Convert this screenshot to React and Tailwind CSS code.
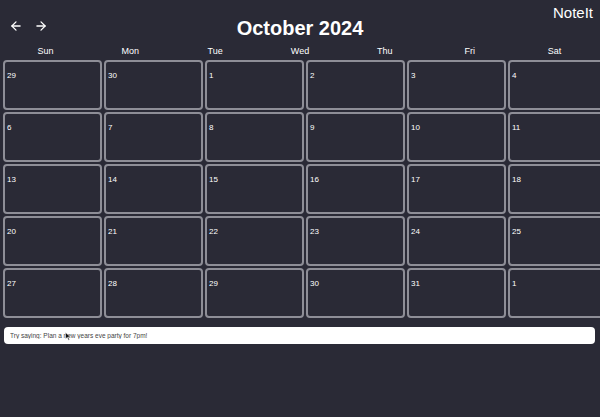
import { ArrowLeft, ArrowRight } from 'lucide-react';

const DAYS = ['Sun', 'Mon', 'Tue', 'Wed', 'Thu', 'Fri', 'Sat'];

// October 2024 starts on a Tuesday, so the grid opens with the last two days of September
const CELLS = [
  29, 30, 1, 2, 3, 4, 5,
  6, 7, 8, 9, 10, 11, 12,
  13, 14, 15, 16, 17, 18, 19,
  20, 21, 22, 23, 24, 25, 26,
  27, 28, 29, 30, 31, 1, 2,
];

function Header() {
  return (
    <div className="grid grid-cols-[1fr_auto_1fr] h-[45px]">
      <div className="flex items-start gap-[11px] pl-[9px] pt-[19px] text-white">
        <button className="p-0">
          <ArrowLeft size={14} strokeWidth={2.2} />
        </button>
        <button className="p-0">
          <ArrowRight size={14} strokeWidth={2.2} />
        </button>
      </div>
      <h1 className="pt-[16px] text-[20px] leading-[24px] font-bold text-white">October 2024</h1>
      <div className="flex justify-end pr-[7px] pt-[4px]">
        <span className="text-[15px] leading-[18px] text-white">NoteIt</span>
      </div>
    </div>
  );
}

function Calendar() {
  return (
    <div>
      <div className="grid grid-cols-7 px-[3px] mb-[3px]">
        {DAYS.map((d) => (
          <div key={d} className="text-center text-[9px] leading-[12px] text-white">
            {d}
          </div>
        ))}
      </div>
      <div className="grid grid-cols-[repeat(7,99px)] gap-[2px] pl-[3px]">
        {CELLS.map((n, i) => (
          <div
            key={i}
            className="h-[50px] rounded-[4px] border-2 border-[#8e8e97] pl-[2px] pt-[8px]"
          >
            <span className="block text-[8px] leading-[12px] text-white">{n}</span>
          </div>
        ))}
      </div>
    </div>
  );
}

export default function App() {
  return (
    <div
      className="w-[600px] h-[417px] overflow-hidden bg-[#2a2a36]"
      style={{ fontFamily: '"Liberation Sans", Arial, sans-serif' }}
    >
      <Header />
      <Calendar />
      <div className="relative mt-[9px] ml-[4px] mr-[5px]">
        <input
          type="text"
          placeholder="Try saying: Plan a new years eve party for 7pm!"
          className="block w-full h-[17px] rounded-[4px] bg-white px-[6px] text-[6.5px] text-[#333] placeholder:text-[#444] outline-none"
        />
        <svg
          className="absolute left-[61px] top-[5px]"
          width="6"
          height="9"
          viewBox="0 0 12 18"
        >
          <path d="M1 1 L1 14 L4.5 10.5 L7 16.5 L9 15.5 L6.5 9.8 L11 9.8 Z" fill="#111" stroke="#fff" strokeWidth="1" />
        </svg>
      </div>
    </div>
  );
}
